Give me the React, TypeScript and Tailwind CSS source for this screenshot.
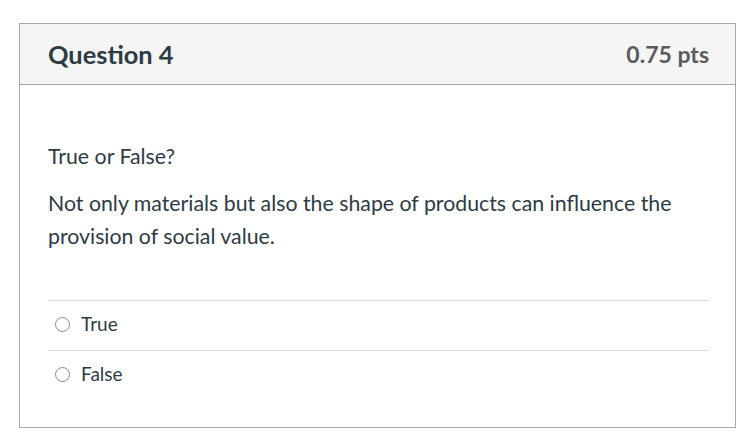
import React from "react";

const options = ["True", "False"];

export default function App() {
  return (
    <div className="bg-white w-[738px] h-[438px] pt-[23px] pl-[19px]" style={{ fontFamily: "Lato, 'Noto Sans', sans-serif" }}>
      <div className="w-[717px] h-[405px] border border-[#a9a9a9] flex flex-col">
        <div className="h-[61px] bg-[#f5f5f5] border-b border-[#a9a9a9] flex items-center justify-between pl-[28px] pr-[26px]">
          <h2 className="text-[25.4px] font-bold text-[#2d3b45]">Question 4</h2>
          <span className="text-[23px] font-bold text-[#5b5b5b]">0.75 pts</span>
        </div>
        <div className="pl-[28px] pr-[26px] pt-[55px] text-[#2d3b45]">
          <p className="text-[21.3px] leading-[33px]">True or False?</p>
          <p className="text-[21.3px] leading-[33px] mt-[14px]">
            Not only materials but also the shape of products can influence the provision of social value.
          </p>
          <div className="mt-[47px]">
            {options.map((o) => (
              <div key={o} className="h-[50px] border-t border-[#dcdcdc] flex items-center pl-[7px] pb-[2px]">
                <span className="w-[15px] h-[15px] rounded-full border border-[#8a8a8a] bg-white"></span>
                <span className="ml-[11px] text-[19px]">{o}</span>
              </div>
            ))}
          </div>
        </div>
      </div>
    </div>
  );
}
